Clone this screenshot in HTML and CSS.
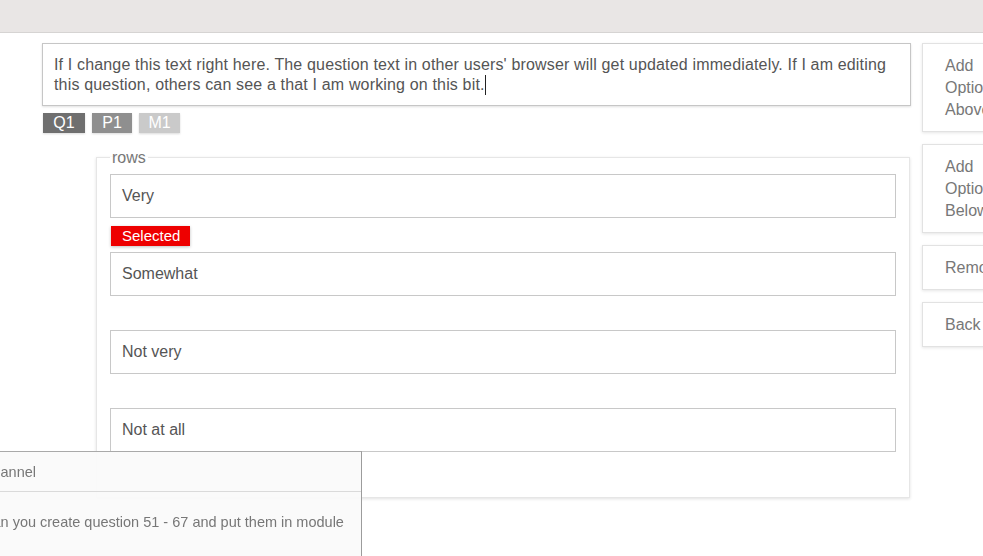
FILE: index.html
```html
<!DOCTYPE html>
<html>
<head>
<meta charset="utf-8">
<link rel="stylesheet" href="styles.css">
</head>
<body>
<div class="topbar"></div>
<div class="main">
  <div class="editor">
    <div class="question">If I change this text right here. The question text in other users' browser will get updated immediately. If I am editing this question, others can see a that I am working on this bit.<span class="caret"></span></div>
    <div class="tags">
      <span class="tag tag-q">Q1</span>
      <span class="tag tag-p">P1</span>
      <span class="tag tag-m">M1</span>
    </div>
    <fieldset class="rows">
      <legend>rows</legend>
      <div class="option">
        <div class="option-box">Very</div>
        <div class="option-meta"><span class="badge">Selected</span></div>
      </div>
      <div class="option">
        <div class="option-box">Somewhat</div>
        <div class="option-meta"></div>
      </div>
      <div class="option">
        <div class="option-box">Not very</div>
        <div class="option-meta"></div>
      </div>
      <div class="option">
        <div class="option-box">Not at all</div>
        <div class="option-meta"></div>
      </div>
    </fieldset>
  </div>
  <div class="actions">
    <button class="action">Add Option Above</button>
    <button class="action">Add Option Below</button>
    <button class="action">Remove</button>
    <button class="action">Back</button>
  </div>
</div>
<div class="chat">
  <div class="chat-head">Channel</div>
  <div class="chat-msg">Can you create question 51 - 67 and put them in module</div>
</div>
</body>
</html>
```

FILE: styles.css
```css
html, body {
  margin: 0;
  padding: 0;
  width: 983px;
  height: 556px;
  overflow: hidden;
  background: #fff;
  font-family: "Liberation Sans", Arial, sans-serif;
}

.topbar {
  height: 32px;
  background: #e9e6e5;
  border-bottom: 1px solid #d6d4d3;
}

.main {
  display: flex;
  align-items: flex-start;
  gap: 11px;
  padding: 10px 0 0 42px;
}

.editor {
  width: 869px;
  flex: none;
}

.question {
  box-sizing: border-box;
  height: 63px;
  border: 1px solid #c6c6c6;
  box-shadow: 0 1px 2px rgba(0, 0, 0, 0.12);
  padding: 11px 20px 0 11px;
  font-size: 16px;
  line-height: 20px;
  letter-spacing: 0.16px;
  color: #555;
}

.caret {
  display: inline-block;
  width: 0;
  height: 20px;
  border-left: 1px solid #222;
  vertical-align: -5px;
}

.tags {
  display: flex;
  gap: 7px;
  margin-top: 7px;
  padding-left: 1px;
}

.tag {
  width: 42px;
  height: 20px;
  line-height: 20px;
  text-align: center;
  color: #fff;
  font-size: 16px;
  box-shadow: 0 1px 2px rgba(0, 0, 0, 0.15);
}
.tag-q { background: #6f6f6f; }
.tag-p { background: #8f8f8f; width: 40px; }
.tag-m { background: #cacaca; width: 41px; }

.rows {
  margin: 15px 0 0 54px;
  width: 814px;
  box-sizing: border-box;
  border: 1px solid #e6e6e6;
  box-shadow: 0 1px 3px rgba(0, 0, 0, 0.12);
  padding: 0 13px 11px 13px;
  min-width: 0;
}

.rows legend {
  padding: 1px 2px 0;
  font-size: 16px;
  line-height: 18px;
  color: #777;
}

.rows .option:first-of-type {
  margin-top: 7px;
}

.option-box {
  box-sizing: border-box;
  height: 44px;
  border: 1px solid #c8c8c8;
  padding-left: 11px;
  line-height: 41px;
  font-size: 16px;
  color: #555;
}

.option-meta {
  height: 34px;
  padding-top: 8px;
  box-sizing: border-box;
}

.badge {
  display: inline-block;
  margin-left: 1px;
  height: 20px;
  line-height: 20px;
  width: 79px;
  box-sizing: border-box;
  padding-left: 11px;
  background: #ee0000;
  color: #fff;
  font-size: 15px;
  box-shadow: 0 1px 3px rgba(0, 0, 0, 0.25);
}

.actions {
  display: flex;
  flex-direction: column;
  gap: 12px;
  width: 110px;
  flex: none;
}

.action {
  box-sizing: border-box;
  width: 110px;
  text-align: left;
  background: #fff;
  border: 1px solid #e2e2e2;
  box-shadow: 0 1px 3px rgba(0, 0, 0, 0.1);
  padding: 11px 20px 10px 22px;
  font-family: "Liberation Sans", Arial, sans-serif;
  font-size: 16px;
  line-height: 22px;
  color: #777;
}

.chat {
  position: fixed;
  left: -30px;
  top: 451px;
  width: 391px;
  height: 140px;
  background: rgba(250, 250, 250, 0.94);
  border-top: 1px solid #a9a9a9;
  border-right: 1px solid #9c9c9c;
  font-size: 14.5px;
  color: #777;
}

.chat-head {
  height: 38px;
  padding-top: 1px;
  line-height: 39px;
  padding-left: 12px;
  border-bottom: 1px solid #dadada;
}

.chat-msg {
  padding: 20px 0 0 12px;
  line-height: 20px;
}
```
